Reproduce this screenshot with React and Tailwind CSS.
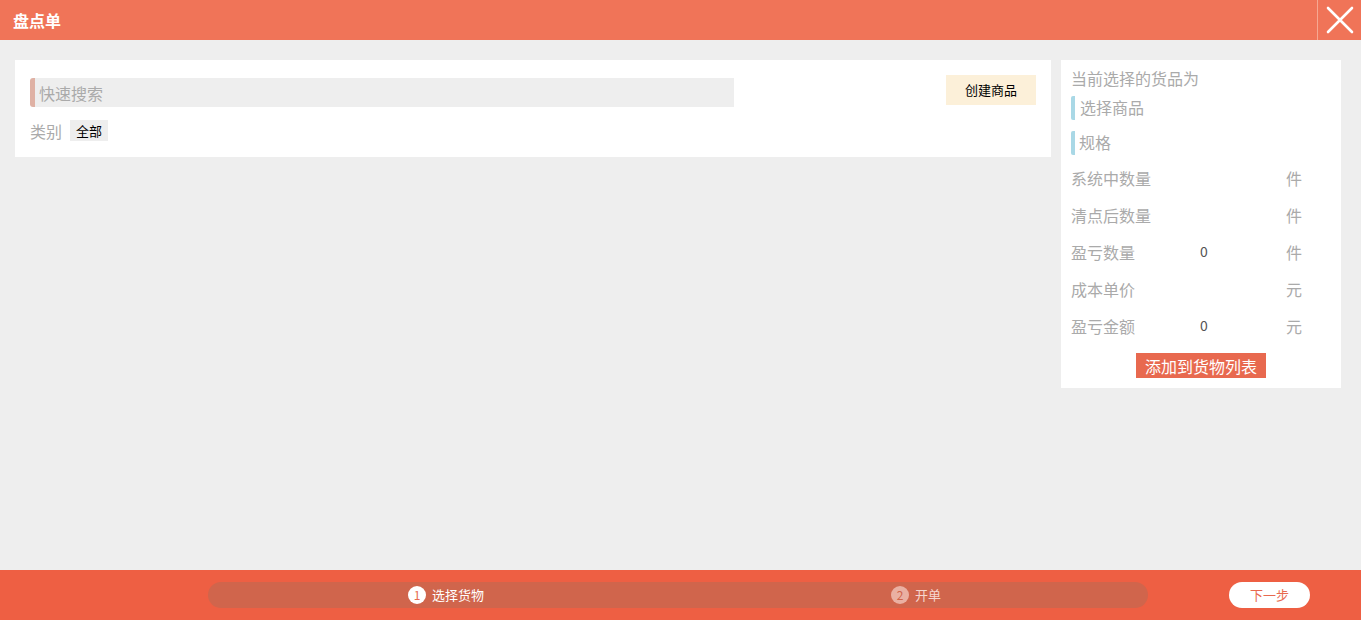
const font = { fontFamily: '"Noto Sans CJK SC", "Noto Sans", sans-serif' };

const rows = [
  { label: '系统中数量', value: '', unit: '件' },
  { label: '清点后数量', value: '', unit: '件' },
  { label: '盈亏数量', value: '0', unit: '件' },
  { label: '成本单价', value: '', unit: '元' },
  { label: '盈亏金额', value: '0', unit: '元' },
];

const App = () => {
  return (
    <div className="h-screen flex flex-col bg-[#eeeeee] overflow-hidden" style={font}>
      {/* header */}
      <div className="h-[40px] bg-[#f07458] flex items-center shrink-0">
        <h1 className="pl-[13px] text-[16px] font-bold text-white flex-1 leading-none">盘点单</h1>
        <button className="w-[44px] h-[40px] border-l border-[#f6a892] flex items-center justify-center">
          <svg width="28" height="28" viewBox="0 0 28 28" fill="none" stroke="white" strokeWidth="2.6" strokeLinecap="round">
            <path d="M2 2 L26 26 M26 2 L2 26" />
          </svg>
        </button>
      </div>

      {/* body */}
      <div className="flex-1 flex items-start gap-[10px] pt-[20px] pl-[15px] pr-[20px]">
        <div className="flex-1 bg-white pt-[15px] pb-[16px] px-[15px]">
          <div className="flex items-start justify-between h-[32px]">
            <div className="mt-[3px] w-[704px] h-[29px] bg-[#eeeeee] border-l-[5px] border-[#dfb1a4] rounded-l-[3px] flex items-center pl-[4px]">
              <input
                className="w-full bg-transparent outline-none text-[16px] text-[#666] placeholder:text-[#aaaaaa]"
                placeholder="快速搜索"
              />
            </div>
            <button className="w-[90px] h-[30px] bg-[#fcf0d9] text-[13px] text-black">创建商品</button>
          </div>
          <div className="mt-[13px] h-[21px] flex items-center leading-none">
            <span className="text-[16px] text-[#aaaaaa] w-[40px]">类别</span>
            <span className="h-[21px] px-[6px] bg-[#eeeeee] text-[13px] text-black flex items-center">全部</span>
          </div>
        </div>

        <div className="w-[280px] bg-white pt-[8px] pb-[10px] px-[10px]">
          <div className="h-[20px] text-[16px] text-[#aaaaaa] leading-[20px]">当前选择的货品为</div>
          <div className="mt-[8px] h-[24px] border-l-[4px] border-[#a9d8e6] rounded-l-[2px] pl-[5px] text-[16px] text-[#aaaaaa] leading-[23px]">选择商品</div>
          <div className="mt-[11px] h-[24px] border-l-[4px] border-[#a9d8e6] rounded-l-[2px] pl-[4px] text-[16px] text-[#aaaaaa] leading-[23px]">规格</div>
          <div className="mt-[4px]">
            {rows.map((r) => (
              <div key={r.label} className="h-[37px] flex items-center">
                <span className="w-[129px] text-[16px] text-[#aaaaaa]">{r.label}</span>
                <span className="w-[86px] text-[14px] text-[#555]">{r.value}</span>
                <span className="text-[16px] text-[#aaaaaa]">{r.unit}</span>
              </div>
            ))}
          </div>
          <div className="mt-[9px] flex justify-center">
            <button className="w-[130px] h-[25px] bg-[#e8694f] text-white text-[16px] leading-none">添加到货物列表</button>
          </div>
        </div>
      </div>

      {/* footer */}
      <div className="h-[50px] bg-[#ee5f43] flex items-center shrink-0 pl-[208px] pr-[51px]">
        <div className="w-[940px] h-[26px] rounded-full bg-[#d0654c] flex">
          <div className="flex-1 flex items-center justify-center gap-[6px] pl-[6px]">
            <span className="w-[18px] h-[18px] rounded-full bg-white text-[#e8694f] text-[12px] flex items-center justify-center leading-none">1</span>
            <span className="text-[13px] text-white">选择货物</span>
          </div>
          <div className="flex-1 flex items-center justify-center gap-[6px] pl-[6px]">
            <span className="w-[18px] h-[18px] rounded-full bg-[#eab0a2] text-[#d0654c] text-[12px] flex items-center justify-center leading-none">2</span>
            <span className="text-[13px] text-[#f6d6ce]">开单</span>
          </div>
        </div>
        <button className="ml-auto w-[81px] h-[26px] rounded-full bg-white text-[#e8694f] text-[13px]">下一步</button>
      </div>
    </div>
  );
};

export default App;
